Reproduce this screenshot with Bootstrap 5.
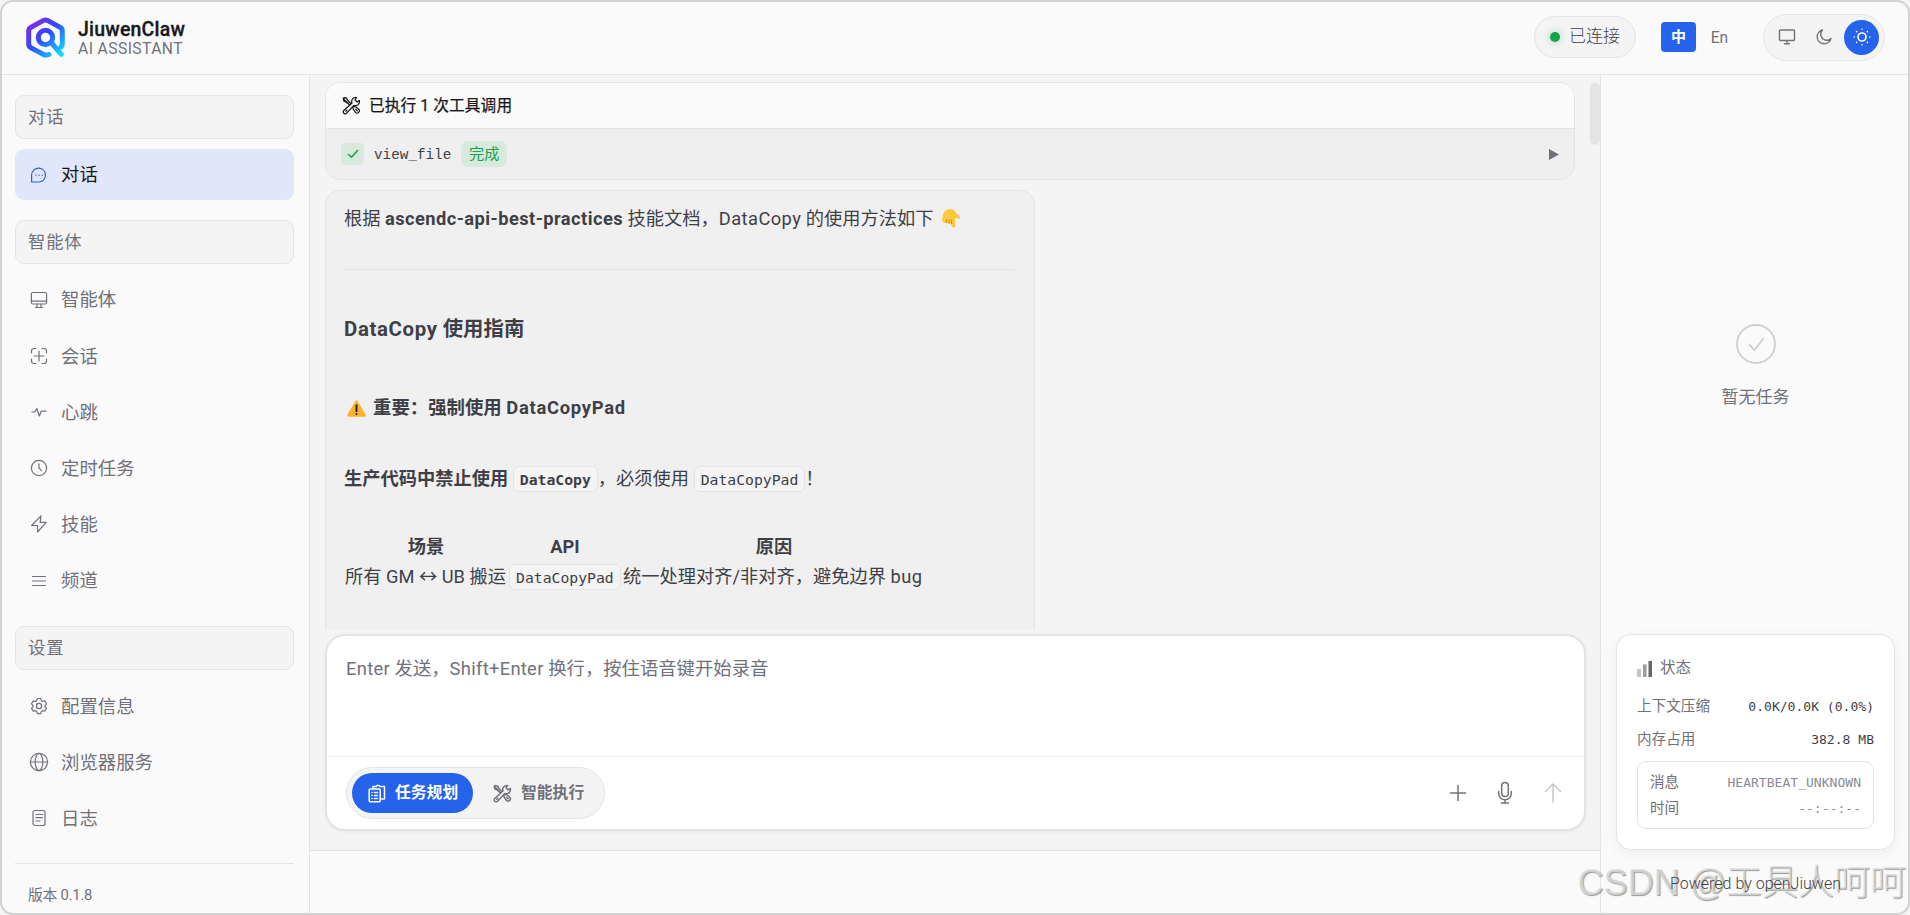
<!DOCTYPE html>
<html lang="zh-CN">
<head>
<meta charset="utf-8">
<meta name="viewport" content="width=device-width, initial-scale=1">
<title>JiuwenClaw</title>
<link href="https://cdn.jsdelivr.net/npm/bootstrap@5.3.0/dist/css/bootstrap.min.css" rel="stylesheet">
<style>
:root{--line:#e4e4e7;--muted:#71717a;--ink:#3f3f46;--blue:#2563eb;--green:#16a34a}
body{margin:0;background:#f4f4f5;font-family:Roboto,"Noto Sans CJK SC",sans-serif;font-size:18px;color:var(--ink);overflow:hidden;white-space:nowrap}
svg{display:block;fill:none;stroke-linecap:round;stroke-linejoin:round;flex:none}
svg:not([stroke]){stroke:currentColor}
.app{height:915px;border:2px solid #d2d2d2;border-radius:13px;background:#fafafa;overflow:hidden}
.topbar{height:73px;border-bottom:1px solid var(--line);padding:0 23px 2px 24px;flex:none}
.brand-name{font-size:19.5px;font-weight:500;line-height:20px;color:#18181b;letter-spacing:.2px;-webkit-text-stroke:.3px #18181b;margin-top:4px}
.brand-sub{font-size:15.7px;line-height:18px;color:var(--muted);letter-spacing:.4px}
.brand-name,.brand-sub{margin-left:-3px}
.conn{width:102px;height:42px;border:1px solid var(--line);border-radius:21px;background:#f4f4f5;padding-left:15px;gap:9px;font-size:17px;font-weight:300}
.dot{width:10px;height:10px;border-radius:50%;background:var(--green);box-shadow:0 0 8px rgba(22,163,74,.4)}
.lang{width:35px;height:30px;border-radius:4px;font-size:15px;color:var(--muted);margin-left:6px}
.lang.on{background:var(--blue);color:#fff;font-weight:700;margin-left:25px}
.lang:not(.on){font-size:15.6px;padding-top:3px}
.theme{width:122px;height:47px;border:1px solid var(--line);border-radius:24px;background:#f4f4f5;padding:0 5px;color:var(--muted);margin-left:26px}
.theme span{width:35px;height:35px;border-radius:50%}
.theme .on{background:var(--blue);color:#fff}
.side{width:308px;border-right:1px solid var(--line);padding:20px 15px 0 13px;flex:none}
.grp{height:44px;border:1px solid var(--line);border-radius:9px;background:#f4f4f5;color:var(--muted);padding:2px 0 0 12px;font-size:17.3px;letter-spacing:.9px;margin-bottom:10px}
.grp:not(:first-child){margin-top:20.2px}
.item{height:51px;border-radius:9px;color:var(--muted);padding-left:14px;font-size:18.4px;gap:12px}
.item>span{padding-top:1px}
.item+.item{margin-top:5.2px}
.item svg{width:20px;height:20px;stroke-width:1.2}
.item.on{background:#e1e7fa;color:#18181b}
.item.on svg{color:var(--blue)}
.ver{border-top:1px solid var(--line);margin-top:19px;padding:20px 0 0 13px;font-size:14.8px;letter-spacing:-.25px;color:var(--muted)}
.mid{background:#f4f4f5;height:776px;padding-left:15px}
.scroller{height:555px;padding-top:7px;overflow:hidden}
.tool{width:1250px;height:98px;border:1px solid var(--line);border-radius:15px;background:#efefef;overflow:hidden}
.tool-head{height:46px;background:#fafafa;border-bottom:1px solid var(--line);padding-left:16px;gap:8px;font-size:15.7px;color:#18181b}
.tool-head span{padding-top:1px;-webkit-text-stroke:.25px #18181b;letter-spacing:.1px}
.tool-row{height:50px;padding:0 15px}
.okbox{width:23px;height:22px;border-radius:4px;background:#d8e9de;color:var(--green)}
.fn{font-family:"Liberation Mono",monospace;font-size:14.3px;margin-left:10px;padding-top:4px}
.done{width:46px;height:26px;border-radius:7px;background:#d8e9de;color:var(--green);font-size:15.2px;margin-left:10px}
.msg{width:710px;height:500px;margin-top:10px;border:1px solid var(--line);border-radius:15px;background:#f0f0f0;padding:13px 18px;font-size:18.25px}
.msg p,.msg h2,.msg h3{margin:0;height:30px;line-height:30px;font-weight:400}
.msg b{font-weight:700}
.msg .skill{letter-spacing:.45px}
.msg .lat{letter-spacing:.45px}
.msg h2{font-size:20.4px;font-weight:700;margin-top:44px}
.msg h2 .lat{letter-spacing:.65px}
.msg h3{font-size:18.4px;font-weight:700;margin-top:49px}
.msg h3 .lat{letter-spacing:.7px}
.rule{height:1px;background:var(--line);margin-top:35px;width:671px}
.msg code{font-family:"DejaVu Sans Mono",monospace;font-size:14.75px;color:var(--ink);background:#f4f4f5;border:1px solid var(--line);border-radius:6px;padding:0 6px;height:26px;line-height:25px;display:inline-block;position:relative;top:0}
.grid{display:grid;grid-template-columns:162px 112px 302px;column-gap:2px;margin-top:39px;margin-left:1px}
.grid>div{height:27px;line-height:27px}
.grid .th{text-align:center;font-weight:700;height:30px}
.composer{width:1261px;height:197px;margin-top:4px;border:2px solid var(--line);border-radius:20px;background:#fff;box-shadow:0 1px 3px rgba(0,0,0,.06)}
.ph{height:120px;padding:18px 19px;color:var(--muted);font-size:18.35px;line-height:30px}
.ph i{font-style:normal;letter-spacing:.3px}
.bar{height:73px;border-top:1px solid #ebebed;padding:0 12px 0 19px;color:var(--muted)}
.modes{width:259px;height:52px;border:1px solid var(--line);border-radius:26px;background:#f4f4f5;padding:0 5px;font-size:15.8px;font-weight:700}
.mode{width:121px;height:40px;border-radius:20px;gap:9px;padding-left:16px}
.mode+.mode{padding-left:20px}
.mode.on{background:var(--blue);color:#fff}
.acts{gap:26px;padding-right:8px}
.thumb{right:0;top:8px;width:10px;height:62px;border-radius:5px;background:var(--line)}
.right{width:308px;border-left:1px solid var(--line);flex:none;padding:0 13px 0 15px}
.empty{height:559px;padding-top:248px;color:var(--muted);font-size:17px;gap:20px}
.stat{height:216px;border:1px solid var(--line);border-radius:15px;background:#fff;box-shadow:0 4px 14px rgba(0,0,0,.05);padding:17px 20px;font-size:14.6px;color:var(--muted)}
.stat .line{height:33px}
.stat .cap{margin-bottom:5px;gap:7px;font-size:15.5px}
.mono{font-family:"DejaVu Sans Mono",monospace;font-size:13.05px;color:var(--ink)}
.beat{height:68px;border:1px solid var(--line);border-radius:9px;margin-top:5px;padding:8px 12px}
.beat .mono{color:#8b8b93}
.beat>div{height:26px}
.powered{font-size:16px;font-weight:300;color:#3f3f46;text-align:center;margin-top:22px;position:relative;z-index:2}
.wm{right:4px;bottom:5px;font-size:36px;line-height:54px;color:rgba(225,225,225,.75);text-shadow:1px 1px 1px rgba(100,100,100,.65);font-family:"Liberation Sans","Noto Sans CJK SC",sans-serif;font-weight:300;pointer-events:none}
</style>
</head>
<body>
<svg width="0" height="0" class="position-absolute">
<defs>
<linearGradient id="lg" gradientUnits="userSpaceOnUse" x1="4" y1="3" x2="36" y2="38"><stop offset="0" stop-color="#8b2be2"/><stop offset=".45" stop-color="#3048ff"/><stop offset="1" stop-color="#12e4ff"/></linearGradient>
<symbol id="tools" viewBox="0 0 20 20"><path d="M2 1.6 4.6 2l1.800 3L9.600 8.200M12.600 11.200c1.300-.5 2.500.2 5 2.700a2.200 2.200 0 0 1-3.300 3.300c-2-2-3.200-3.300-2.700-5M8.200 9.600 4.500 6.500 1.900 5.200 1.300 2.500zM14.500 14l1.500 1.500M18.300 4.700l-2.500 1.500-2-2 1.400-2.600a4.300 4.300 0 0 0-4.700 5.800L1.900 15.200a2 2 0 0 0 2.900 2.900L12.500 10c3.600 1 6.500-1.600 5.800-5.300M4 16l1-1"/></symbol>
</defs>
</svg>
<div class="app d-flex flex-column">
<header class="topbar d-flex align-items-center">
  <svg width="39" height="41" viewBox="0 0 39 41" stroke="url(#lg)" stroke-width="5"><path d="M23 37.500Q20 38.800 17 37.200L4.700 30.600Q2.700 29.500 2.700 27V13.800q0-2.300 2-3.300L17.500 3.400q2-1 4 0l12.800 7.100q2 1 2 3.300V27q0 2-1.300 3M26 26.500l9.300 10.800"/><circle cx="19.500" cy="20.500" r="7.200"/></svg>
  <div class="ms-3"><div class="brand-name">JiuwenClaw</div><div class="brand-sub">AI ASSISTANT</div></div>
  <div class="conn d-flex align-items-center ms-auto"><span class="dot"></span>已连接</div>
  <span class="lang on d-flex align-items-center justify-content-center">中</span>
  <span class="lang d-flex align-items-center justify-content-center">En</span>
  <div class="theme d-flex align-items-center justify-content-between">
    <span class="d-flex align-items-center justify-content-center"><svg width="18" height="18" viewBox="0 0 18 18" stroke-width="1.400"><rect x="1.500" y="2" width="15" height="10.500" rx="1"/><path d="M9 12.500v3M6.500 15.700h5"/></svg></span>
    <span class="d-flex align-items-center justify-content-center"><svg width="18" height="18" viewBox="0 0 18 18" stroke-width="1.400"><path d="M7.500 2A7 7 0 1 0 16 10.500 5.600 5.600 0 0 1 7.500 2z"/></svg></span>
    <span class="on d-flex align-items-center justify-content-center"><svg width="20" height="20" viewBox="0 0 20 20" stroke-width="1.600"><circle cx="10" cy="10" r="4"/><path d="M10 2.200v.1M10 17.700v.1M2.200 10h.1M17.700 10h.1M4.600 4.600v.1M15.400 4.600v.1M4.600 15.400v.1M15.400 15.400v.1"/></svg></span>
  </div>
</header>
<div class="d-flex flex-grow-1">
<nav class="side">
  <div class="grp d-flex align-items-center">对话</div>
  <div class="item on d-flex align-items-center"><svg viewBox="0 0 20 20"><path d="M2.600 17V10a7 7 0 0 1 7-6.800h1a7 7 0 0 1 0 13.800z"/><path d="M6.800 10.200h.2M10 10.200h.2M13.200 10.200h.2"/></svg><span>对话</span></div>
  <div class="grp d-flex align-items-center">智能体</div>
  <div class="item d-flex align-items-center"><svg viewBox="0 0 20 20"><rect x="2.400" y="2.500" width="15.200" height="11.500" rx="1.500"/><path d="M2.400 11.200h15.200M8 14v3.500M12 14v3.500M6.500 17.500h7"/></svg><span>智能体</span></div>
  <div class="item d-flex align-items-center"><svg viewBox="0 0 20 20"><path d="M2.500 7V5q0-2.500 2.500-2.500h2M13 2.500h2q2.500 0 2.500 2.500v2M17.500 13v2q0 2.500-2.500 2.500h-2M7 17.500H5q-2.500 0-2.500-2.500v-2M10 5v10M5 10h10"/></svg><span>会话</span></div>
  <div class="item d-flex align-items-center"><svg viewBox="0 0 20 20"><path d="M3 10h3l1.800-3.500L10.400 14l1.800-4.800H17"/></svg><span>心跳</span></div>
  <div class="item d-flex align-items-center"><svg viewBox="0 0 20 20"><circle cx="10" cy="10" r="7.600"/><path d="M10 5.800V10l2.500 2.600"/></svg><span>定时任务</span></div>
  <div class="item d-flex align-items-center"><svg viewBox="0 0 20 20"><path d="M12 1.800 2.600 11.500h6L8.500 18l8.700-9.600h-6z"/></svg><span>技能</span></div>
  <div class="item d-flex align-items-center"><svg viewBox="0 0 20 20"><path d="M3.500 5.500h13M3.500 10h13M3.500 14.500h13"/></svg><span>频道</span></div>
  <div class="grp d-flex align-items-center">设置</div>
  <div class="item d-flex align-items-center"><svg viewBox="0 0 20 20"><path d="M8.300 2.500h3.400l.7 2.200 1.200.7 2.200-.5 1.700 2.900L16 9.500v1.100l1.500 1.700-1.700 2.900-2.200-.5-1.200.7-.7 2.200H8.300l-.7-2.200-1.200-.7-2.200.5-1.700-2.900L4 10.600V9.500L2.500 7.800l1.700-2.900 2.200.5 1.200-.7z"/><circle cx="10" cy="10" r="2.600"/></svg><span>配置信息</span></div>
  <div class="item d-flex align-items-center"><svg viewBox="0 0 20 20"><circle cx="10" cy="10" r="8.600"/><ellipse cx="10" cy="10" rx="3.800" ry="8.600"/><path d="M1.400 10h17.200"/></svg><span>浏览器服务</span></div>
  <div class="item d-flex align-items-center"><svg viewBox="0 0 20 20"><rect x="4" y="2.500" width="12" height="15" rx="2"/><path d="M7 6.500h6.500M7 9.700h6.500M7 13h4"/></svg><span>日志</span></div>
  <div class="ver">版本 0.1.8</div>
</nav>
<main class="flex-grow-1">
  <div class="mid position-relative border-bottom">
    <div class="scroller">
      <section class="tool">
        <div class="tool-head d-flex align-items-center"><svg width="19" height="19" stroke-width="1.300"><use href="#tools"/></svg><span>已执行 1 次工具调用</span></div>
        <div class="tool-row d-flex align-items-center"><span class="okbox d-flex align-items-center justify-content-center"><svg width="12" height="10" viewBox="0 0 12 10" stroke-width="1.600"><path d="M1.500 5.500 4.500 8.200 10.500 1.500"/></svg></span><span class="fn">view_file</span><span class="done d-flex align-items-center justify-content-center">完成</span><svg class="ms-auto" width="10" height="11" viewBox="0 0 10 11" stroke="none"><path d="M0 0 10 5.500 0 11z" fill="#71717a"/></svg></div>
      </section>
      <article class="msg">
        <p class="d-flex align-items-center"><span>根据 <b class="skill">ascendc-api-best-practices</b> 技能文档，<span class="lat">DataCopy</span> 的使用方法如下</span><svg class="ms-2" width="18" height="20" viewBox="0 0 18 20" stroke="none"><path fill="#ffc83d" d="M1 5Q3 0 9 0q3 0 4.500 3L18 8q.5 2-1.500 1.800L13.200 9v7.500q-.4 2.500-2 2t-1.500-2.500v-2q-1.500 1.500-2.700.2-1.600 1-2.700-.4Q0 14 0 11z"/><path d="M4.300 10.500v3M7 11v3M9.700 11v4" stroke="#d67d00" stroke-width=".9"/></svg></p>
        <div class="rule"></div>
        <h2><span class="lat">DataCopy</span> 使用指南</h2>
        <h3 class="d-flex align-items-center"><svg style="margin:0 7px 0 3px" width="19" height="17" viewBox="0 0 20 18" stroke="none"><path fill="#ffb02e" d="M8.800 1.200q1.200-2 2.400 0l8.300 14q1 2.300-1.300 2.500H1.800Q-.5 17.500.5 15.200z"/><path d="M10 5.500v6.300M10 14.800v.1" stroke="#212121" stroke-width="2"/></svg><span>重要：强制使用 <span class="lat">DataCopyPad</span></span></h3>
        <p style="margin-top:41px"><b>生产代码中禁止使用 <code>DataCopy</code></b>，必须使用 <code>DataCopyPad</code>！</p>
        <div class="grid"><div class="th">场景</div><div class="th">API</div><div class="th">原因</div><div>所有 GM ↔ UB 搬运</div><div><code>DataCopyPad</code></div><div>统一处理对齐/非对齐，避免边界 <span class="lat">bug</span></div></div>
      </article>
    </div>
    <section class="composer">
      <div class="ph"><i>Enter</i> 发送，<i>Shift+Enter</i> 换行，按住语音键开始录音</div>
      <div class="bar d-flex align-items-center">
        <div class="modes d-flex align-items-center">
          <span class="mode on d-flex align-items-center"><svg width="18" height="19" viewBox="0 0 18 19" stroke-width="1.500"><rect x="1.200" y="5" width="11" height="12.800" rx="1"/><path d="M5 5V2.500h3Q10 0 12 2.500h4.500V15H12.500M4 8.500h.2M6.500 8.500h3M4 11.500h.2M6.500 11.500h3M4 14.500h.2M6.500 14.500h3"/></svg>任务规划</span>
          <span class="mode d-flex align-items-center"><svg width="19" height="19" stroke-width="1.600"><use href="#tools"/></svg>智能执行</span>
        </div>
        <div class="acts d-flex align-items-center ms-auto">
          <svg width="20" height="22" viewBox="0 0 20 22" stroke-width="1.500"><path d="M10 3.500v15M2.500 11h15"/></svg>
          <svg width="22" height="24" viewBox="0 0 22 24" stroke-width="1.500"><rect x="7.700" y="1.500" width="6.600" height="14" rx="3.300"/><path d="M4.700 10.500v2a6.300 6.300 0 0 0 12.600 0v-2M11 19v3M7.500 22h7"/></svg>
          <svg width="22" height="22" viewBox="0 0 22 22" stroke-width="1.400" stroke="#c4c4c8"><path d="M11 20V2M3.500 9.500 11 2l7.500 7.500"/></svg>
        </div>
      </div>
    </section>
    <div class="thumb position-absolute"></div>
  </div>
</main>
<aside class="right">
  <div class="empty d-flex flex-column align-items-center"><svg width="42" height="42" viewBox="0 0 42 42" stroke="#cfcfd1" stroke-width="1.800"><circle cx="21" cy="21" r="19"/><path d="M14.500 22 19.500 27 28 16"/></svg><span>暂无任务</span></div>
  <section class="stat">
    <div class="line cap d-flex align-items-center"><svg width="16" height="16" viewBox="0 0 16 16" stroke="none"><path fill="#c4c4c8" d="M0 8h4v8H0z"/><path fill="#9b9ba2" d="M6 3.500h3.500V16H6z"/><path fill="#66666e" d="M11.500 0H15v16h-3.500z"/></svg>状态</div>
    <div class="line d-flex align-items-center justify-content-between">上下文压缩<span class="mono">0.0K/0.0K (0.0%)</span></div>
    <div class="line d-flex align-items-center justify-content-between">内存占用<span class="mono">382.8 MB</span></div>
    <div class="beat"><div class="d-flex align-items-center justify-content-between">消息<span class="mono">HEARTBEAT_UNKNOWN</span></div><div class="d-flex align-items-center justify-content-between">时间<span class="mono">--:--:--</span></div></div>
  </section>
  <div class="powered">Powered by openJiuwen</div>
</aside>
</div>
</div>
<div class="wm position-absolute">CSDN @工具人呵呵</div>
<script src="https://cdn.jsdelivr.net/npm/bootstrap@5.3.0/dist/js/bootstrap.bundle.min.js"></script>
</body>
</html>
